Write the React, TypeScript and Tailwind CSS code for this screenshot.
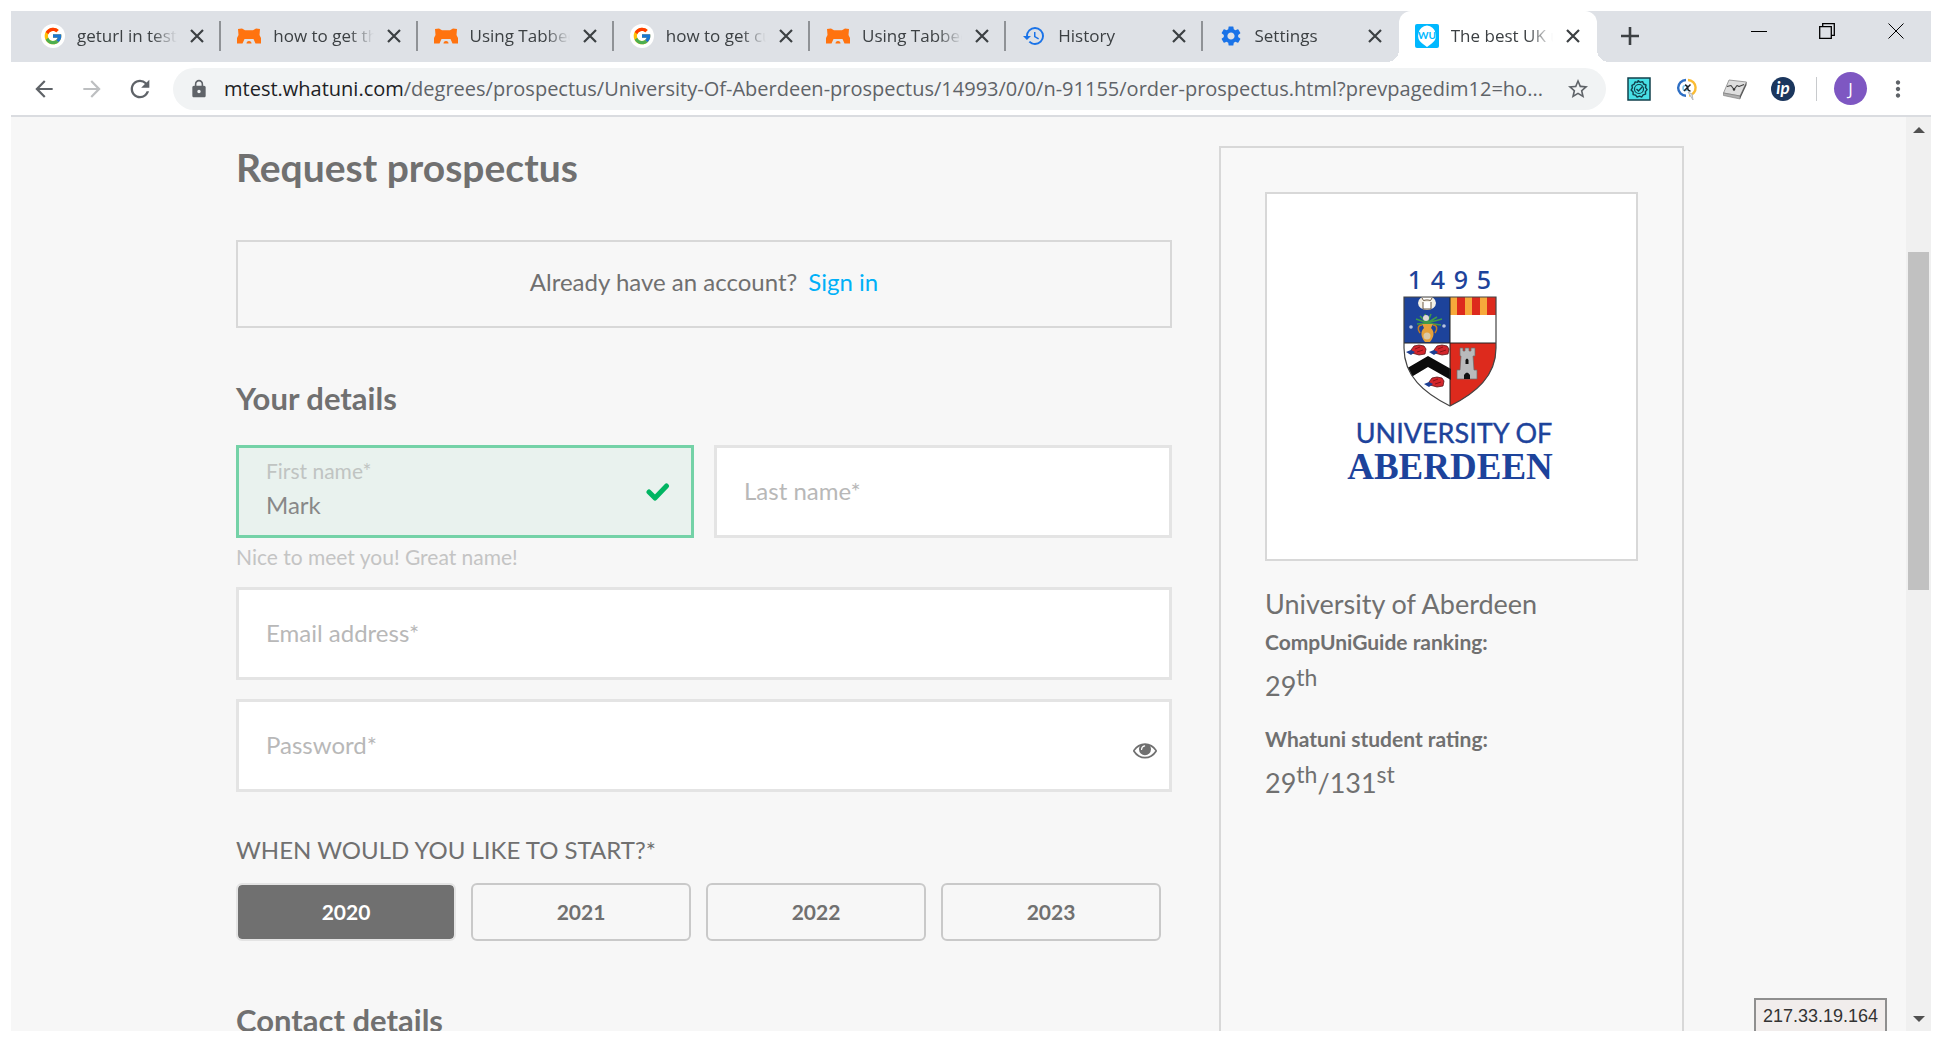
import React from "react";
import { FcGoogle } from "react-icons/fc";
import { MdHistory, MdSettings, MdLock, MdStarBorder, MdMoreVert, MdArrowBack, MdArrowForward, MdRefresh } from "react-icons/md";

const GoogleIcon = () => (
  <span className="grid size-6 place-items-center rounded-full bg-white">
    <FcGoogle className="size-5" />
  </span>
);

const BearIcon = () => (
  <svg viewBox="0 0 24 16" className="h-4 w-6" fill="#ff730f">
    <path d="M1 1 5 .500 8 2.200h8L19 .500 23 1l-.500 6L24 10v5.500h-5.500L16.500 11h-9l-2 4.500H0V10l1.500-3z" />
    <path d="M9.500 15.500q0-2.500 2.500-2.500t2.500 2.500z" />
  </svg>
);

const WhatuniIcon = () => (
  <svg viewBox="0 0 24 24" className="size-6">
    <rect width="24" height="24" rx="2" fill="#00b8ff" />
    <path d="M12 1.500a10 10 0 0 1 5 17.800L12 23l-5-3.700A10 10 0 0 1 12 1.500z" fill="#fff" />
    <text x="12" y="15" textAnchor="middle" fontSize="10" fontWeight="700" fill="#00b8ff" fontFamily="Lato, sans-serif">WU</text>
  </svg>
);

const CloseIcon = () => (
  <svg viewBox="0 0 14 14" className="size-[14px]" fill="none" stroke="currentColor" strokeWidth="2.200">
    <path d="m1 1 12 12M13 1 1 13" />
  </svg>
);

const tabs = [
  { title: "geturl in testcomplete", icon: <GoogleIcon /> },
  { title: "how to get the url of page", icon: <BearIcon /> },
  { title: "Using Tabbed browsing", icon: <BearIcon /> },
  { title: "how to get current url", icon: <GoogleIcon /> },
  { title: "Using Tabbed browsing", icon: <BearIcon /> },
  { title: "History", icon: <MdHistory className="size-6 text-[#1a73e8]" /> },
  { title: "Settings", icon: <MdSettings className="size-6 text-[#1a73e8]" /> },
  { title: "The best UK university", icon: <WhatuniIcon />, active: true },
];

function TabStrip() {
  return (
    <header className="flex h-[51px] shrink-0 items-stretch bg-[#dee1e6] pl-[14px] text-[#3c4043]">
      <div className="flex min-w-0 flex-[0_1_1572px]">
        {tabs.map((tab, i) => (
          <div
            key={i}
            className={
              tab.active
                ? "relative flex min-w-0 flex-1 items-center rounded-t-xl bg-white pr-3 pb-[2px] pl-4"
                : "flex min-w-0 flex-1 items-center pr-[10px] pb-[2px] pl-4"
            }
          >
            {tab.active && (
              <>
                <span className="absolute bottom-0 -left-3 size-3 bg-[radial-gradient(circle_at_0_0,#dee1e6_12px,white_12px)]" />
                <span className="absolute -right-3 bottom-0 size-3 bg-[radial-gradient(circle_at_100%_0,#dee1e6_12px,white_12px)]" />
              </>
            )}
            <span className="grid w-6 shrink-0 place-items-center">{tab.icon}</span>
            <a
              href="#"
              className="ml-3 min-w-0 flex-1 overflow-hidden text-[17px] leading-6 whitespace-nowrap [mask-image:linear-gradient(to_right,black_75%,transparent)]"
            >
              {tab.title}
            </a>
            <button aria-label="Close tab" className="ml-2 grid size-6 shrink-0 place-items-center">
              <CloseIcon />
            </button>
            {!tab.active && (
              <span className={i < 6 ? "-mr-[10px] ml-[10px] h-[30px] w-[2px] shrink-0 bg-[#8f9296]" : "-mr-[10px] ml-[10px] w-[2px] shrink-0"} />
            )}
          </div>
        ))}
      </div>
      <button aria-label="New tab" className="ml-5 grid w-[26px] place-items-center pb-[2px]">
        <svg viewBox="0 0 18 18" className="size-[18px]" stroke="currentColor" strokeWidth="2.600"><path d="M9 0v18M0 9h18" /></svg>
      </button>
      <div className="ml-auto flex pb-3 text-black">
        <button aria-label="Minimize" className="grid w-[68px] place-items-center">
          <svg viewBox="0 0 16 16" className="size-4" stroke="currentColor"><path d="M0 8.500h16" /></svg>
        </button>
        <button aria-label="Restore" className="grid w-[68px] place-items-center">
          <svg viewBox="0 0 16 16" className="size-4" fill="none" stroke="currentColor" strokeWidth="1.300">
            <path d="M.7 3.700h11.600v11.600H.7zM3.700 3.700V.7h11.600v11.600h-3" />
          </svg>
        </button>
        <button aria-label="Close window" className="grid w-[70px] place-items-center">
          <svg viewBox="0 0 16 16" className="size-4" stroke="currentColor"><path d="m.5.500 15 15m0-15-15 15" /></svg>
        </button>
      </div>
    </header>
  );
}

const BadgeExtension = () => (
  <svg viewBox="0 0 24 24" className="size-6">
    <rect x="1" y="1" width="22" height="22" fill="#48e0e6" stroke="#12404c" strokeWidth="1.500" />
    <path
      d="M12 4l2 1.600 2.500-.6 1 2.400 2.400 1-.500 2.500L21 13l-1.700 2 .2 2.500-2.500.7-1.300 2.200-2.400-.8-2.300.9-1.500-2-2.500-.5v-2.500L5 13.500l1.300-2.300-.5-2.500 2.300-1.100 1-2.300 2.500.5z"
      transform="translate(-.9 -.4)"
      fill="none"
      stroke="#12404c"
      strokeWidth="1.400"
      strokeLinejoin="round"
    />
    <circle cx="12" cy="12" r="4.500" fill="none" stroke="#12404c" strokeWidth="1.200" />
    <path d="m9.500 12 2 2 4-4.500" fill="none" stroke="#12404c" strokeWidth="1.400" />
  </svg>
);

const RingExtension = () => (
  <svg viewBox="0 0 24 24" className="size-6" fill="none">
    <path d="M11 3a7.800 7.800 0 0 0 0 15.700" stroke="#2e6fc4" strokeWidth="2.400" />
    <path d="M13 3a7.800 7.800 0 0 1 1 15.500" stroke="#fbbc34" strokeWidth="2.400" />
    <path d="m13 15 5 8-1-6z" fill="#e4e6e9" stroke="#b5b9be" />
    <circle cx="10.500" cy="11" r="2.500" stroke="#7cc4ea" strokeWidth="1.500" />
    <path d="M10 8q2 0 2.500 3t3 3M15.500 7.500 9 14" stroke="#222" strokeWidth="1.500" />
  </svg>
);

const SheetExtension = () => (
  <svg viewBox="0 0 24 24" className="size-6" strokeLinejoin="round">
    <path d="M6 3 23.500 5 17 19 .500 16z" fill="#dedede" stroke="#888" strokeWidth=".8" />
    <path d="m.5 16 16.500 3v3L.500 18.500z" fill="#b0b0b0" stroke="#777" strokeWidth=".6" />
    <path d="m17 19 6.500-14v3L17 22z" fill="#555" />
    <path d="m4 9.500 4-1 3 4 3-4 2 1 5-2" fill="none" stroke="#444" strokeWidth="1.200" />
    <circle cx="11" cy="12.500" r="1.200" fill="#333" />
  </svg>
);

const IpExtension = () => (
  <svg viewBox="0 0 24 24" className="size-6">
    <circle cx="12" cy="12" r="12" fill="#1b365d" />
    <text x="12" y="17" textAnchor="middle" fontSize="17" fontStyle="italic" fontWeight="700" fill="#fff" fontFamily="Lato, sans-serif">ip</text>
  </svg>
);

function Toolbar() {
  return (
    <div className="flex h-[55px] shrink-0 items-center border-b-2 border-[#dadce0] bg-white px-5 text-[#5f6368]">
      <button aria-label="Back"><MdArrowBack className="size-[26px]" /></button>
      <button aria-label="Forward" className="ml-[22px] text-[#bdbfc1]"><MdArrowForward className="size-[26px]" /></button>
      <button aria-label="Reload" className="ml-[21px]"><MdRefresh className="size-7" /></button>
      <form className="ml-[19px] flex h-[42px] min-w-0 flex-1 items-center rounded-full bg-[#f1f3f4] px-4">
        <MdLock className="size-5 shrink-0" />
        <div className="ml-[15px] min-w-0 flex-1 truncate text-[20px] leading-7">
          <span className="text-[#202124]">mtest.whatuni.com</span>
          /degrees/prospectus/University-Of-Aberdeen-prospectus/14993/0/0/n-91155/order-prospectus.html?prevpagedim12=ho...
        </div>
        <button type="button" aria-label="Bookmark" className="ml-3"><MdStarBorder className="size-6" /></button>
      </form>
      <div className="ml-[21px] flex items-center gap-6">
        <button aria-label="Badge extension"><BadgeExtension /></button>
        <button aria-label="Ring extension"><RingExtension /></button>
        <button aria-label="Sheet extension"><SheetExtension /></button>
        <button aria-label="IP extension"><IpExtension /></button>
      </div>
      <span className="mr-[17px] ml-[21px] h-6 w-px bg-[#c8cacd]" />
      <button className="grid size-[33px] place-items-center rounded-full bg-[#7e57c2] text-[17px] leading-6 text-white">J</button>
      <button aria-label="Menu" className="ml-[18px]"><MdMoreVert className="size-[26px]" /></button>
    </div>
  );
}

const fieldClass =
  "block h-[93px] w-full border-[3px] border-[#e4e4e4] bg-white px-[27px] pb-[2px] text-[24px] leading-8 text-[#888] outline-none placeholder:text-[#b8b8b8]";

function ProspectusForm() {
  return (
    <form className="min-w-0 flex-1">
      <h1 className="text-[39px] leading-[48px] font-bold">Request prospectus</h1>
      <p className="mt-[49px] flex h-22 items-center justify-center border-2 border-[#d8d8d8] pb-1 text-[24px] leading-8">
        Already have an account?
        <a href="#" className="ml-[11px] text-[#00b0f8]">Sign in</a>
      </p>
      <h2 className="mt-[51px] text-[31px] leading-[38px] font-bold">Your details</h2>
      <div className="mt-7 grid grid-cols-2 gap-5">
        <div>
          <div className="relative">
            <input
              id="first"
              defaultValue="Mark"
              className="block h-[93px] w-full border-[3px] border-[#74d2a7] bg-[#e9f2ee] px-[27px] pt-[26px] text-[24px] leading-8 text-[#888] outline-none"
            />
            <label htmlFor="first" className="absolute top-3 left-[30px] text-[21px] leading-7 text-[#c0c4c2]">First name*</label>
            <svg viewBox="0 0 24 18" className="absolute top-[38px] right-6 h-[18px] w-6" fill="none" stroke="#00b562" strokeWidth="5" strokeLinecap="round" strokeLinejoin="round">
              <path d="m3 9 6 6L20.500 3" />
            </svg>
          </div>
          <p className="mt-[5px] text-[21px] leading-7 text-[#c4c4c4]">Nice to meet you! Great name!</p>
        </div>
        <input aria-label="Last name" placeholder="Last name*" className={fieldClass} />
      </div>
      <input aria-label="Email address" placeholder="Email address*" className={`mt-4 ${fieldClass}`} />
      <div className="relative mt-[19px]">
        <input aria-label="Password" type="password" placeholder="Password*" className={fieldClass} />
        <button type="button" aria-label="Show password" className="absolute top-[39px] right-[15px]">
          <svg viewBox="0 0 1792 1792" className="size-6" fill="#707070">
            <path d="M1664 960q-152-236-381-353 61 104 61 225 0 185-131.500 316.500t-316.500 131.500-316.500-131.500-131.500-316.500q0-121 61-225-229 117-381 353 133 205 333.500 326.500t434.500 121.500 434.500-121.500 333.500-326.500zm-720-384q0-20-14-34t-34-14q-125 0-214.500 89.500t-89.500 214.500q0 20 14 34t34 14 34-14 14-34q0-86 61-147t147-61q20 0 34-14t14-34zm848 384q0 34-20 69-140 230-376.500 368.500t-499.500 138.500-499.500-139-376.500-368q-20-35-20-69t20-69q140-229 376.500-368t499.500-139 499.500 139 376.500 368q20 35 20 69z" />
            <circle cx="896" cy="832" r="390" />
            <path d="M640 850q0-200 230-260" fill="none" stroke="#fff" strokeWidth="90" strokeLinecap="round" />
          </svg>
        </button>
      </div>
      <fieldset className="mt-[42px]">
        <legend className="text-[24px] leading-8">WHEN WOULD YOU LIKE TO START?*</legend>
        <div className="mt-[17px] grid grid-cols-4 gap-[15px] pr-[11px]">
          {["2020", "2021", "2022", "2023"].map((year) => (
            <label
              key={year}
              className="relative grid h-[58px] place-items-center rounded-md border-2 border-[#c9c9c9] text-[21px] leading-7 font-bold has-checked:border-[#e4e4e4] has-checked:bg-[#707070] has-checked:bg-clip-padding has-checked:text-white"
            >
              <input type="radio" name="year" defaultChecked={year === "2020"} className="sr-only" />
              {year}
            </label>
          ))}
        </div>
      </fieldset>
      <h2 className="mt-[60px] text-[31px] leading-[38px] font-bold">Contact details</h2>
    </form>
  );
}

const Head = ({ x, y }: { x: number; y: number }) => (
  <g transform={`translate(${x} ${y})`}>
    <path d="M5 5 8 1l5-1 5 1 2 3-1 5-6 1-7-2z" fill="#d3262c" stroke="#5d1416" strokeWidth=".8" />
    <path d="m0 7 5-2 4 2-4 3z" fill="#1d3f94" />
    <path d="m9 4 5-2m-3 5 6-2" stroke="#8c1519" fill="none" />
  </g>
);

function AberdeenLogo() {
  return (
    <svg viewBox="0 0 210 220" className="h-[220px] w-[210px]" role="img" aria-label="University of Aberdeen 1495">
      <g fill="#1d439b">
        <g fontSize="25" textAnchor="middle" fontWeight="500" fontFamily="'Noto Sans', sans-serif">
          {["1", "4", "9", "5"].map((digit, i) => (
            <text key={digit} x={68 + i * 23} y="23">{digit}</text>
          ))}
        </g>
        <text x="107" y="177" textAnchor="middle" fontSize="27" stroke="#1d439b" strokeWidth=".4" fontFamily="Lato, sans-serif">UNIVERSITY OF</text>
        <text x="103" y="213" textAnchor="middle" fontSize="37" fontWeight="700" fontFamily="'Liberation Serif', serif">ABERDEEN</text>
      </g>
      <g transform="translate(-1 0)">
        <clipPath id="shield"><path d="M58 31h92v51c0 28-20 45-46 58C78 127 58 110 58 82z" /></clipPath>
        <g clipPath="url(#shield)">
          <path fill="#fff" d="M58 31h92v110H58z" />
          <path fill="#1d439b" d="M58 31h46v46H58z" />
          <path fill="#dd2a1d" d="M104 77h46v64h-46zM104 31h46v18h-46z" />
          <path fill="#f6a93b" d="M104 31h7v18h-7zM119 31h7v18h-7zM134 31h7v18h-7z" />
          <ellipse cx="81" cy="37" rx="9" ry="7" fill="#f4f0e6" />
          <path d="M76 32q1 4 4 2h2q3 2 4-2M77 36v7h8v-7" fill="#fff" stroke="#6b5840" />
          <path d="M81 57 70 53m11 4-7-7m7 7-2-9m2 9 4-9m-4 9 10-6m-10 6 15-4m-15 4 14 2m-13-2-11 1" stroke="#3f9a4a" strokeWidth="1.600" />
          <circle cx="80" cy="52" r="3" fill="#ded6d6" />
          <path d="M76 58h11l-2 4c4 4 3 9-1 14h-5c-4-5-5-10-1-14z" fill="#e5a03a" />
          <path d="M76 59c-4 0-5 4-2 8m13-8c4 0 5 4 2 8" fill="none" stroke="#c27b22" strokeWidth="1.600" />
          <circle cx="81" cy="70" r="3.500" fill="#d9c9a8" />
          <circle cx="65" cy="61" r="1.800" fill="#b9c3de" />
          <circle cx="98" cy="60" r="1.800" fill="#b9c3de" />
          <path d="m58 104 24-14 23 13v11L82 101l-20 12z" fill="#0b0b0b" />
          <Head x={60} y={79} />
          <Head x={83} y={79} />
          <Head x={78} y={111} />
          <path d="M114 82h3v3h2v-3h4v3h2v-3h4v8h-2l1 14h3v9h-20v-9h3l1-14h-1z" fill="#b9babc" stroke="#6b6b6b" strokeWidth=".7" />
          <path d="M118 113v-4q3-5 6 0v4zM119.500 98v-4q1.500-3 3 0v4z" fill="#111" />
          <path d="M104 31v110M58 77h92" stroke="#222" />
        </g>
        <path d="M58 31h92v51c0 28-20 45-46 58C78 127 58 110 58 82z" fill="none" stroke="#444" strokeWidth="1.200" />
      </g>
    </svg>
  );
}

const sup = "relative -top-[10px] align-baseline text-[23px] leading-none";

function UniversityCard() {
  return (
    <aside className="w-[465px] shrink-0 self-stretch border-2 border-b-0 border-[#d8d8d8] bg-[#f8f8f8] px-11 pt-11">
      <div className="flex h-[369px] justify-center border-2 border-[#d8d8d8] bg-white pt-[72px]">
        <AberdeenLogo />
      </div>
      <h3 className="mt-[25px] text-[27px] leading-9">University of Aberdeen</h3>
      <p className="mt-[6px] text-[21px] leading-7 font-bold">CompUniGuide ranking:</p>
      <p className="mt-3 text-[27px] leading-9">29<sup className={sup}>th</sup></p>
      <p className="mt-[21px] text-[21px] leading-7 font-bold">Whatuni student rating:</p>
      <p className="mt-3 text-[27px] leading-9">29<sup className={sup}>th</sup>/131<sup className={sup}>st</sup></p>
    </aside>
  );
}

function Scrollbar() {
  return (
    <div className="flex w-[25px] shrink-0 flex-col items-center bg-[#f0f0f0] pt-[10px] pb-[9px]">
      <span className="border-x-[6px] border-b-[6px] border-x-transparent border-b-[#505050]" />
      <span className="mt-[119px] h-[338px] w-[21px] bg-[#c1c1c1]" />
      <span className="mt-auto border-x-[6px] border-t-[6px] border-x-transparent border-t-[#505050]" />
    </div>
  );
}

export default function App() {
  return (
    <div className="h-screen bg-white p-[11px] font-['Open_Sans',sans-serif]">
      <div className="flex h-full flex-col overflow-hidden">
        <TabStrip />
        <Toolbar />
        <div className="flex min-h-0 flex-1">
          <div className="relative min-w-0 flex-1 overflow-hidden bg-[#f7f7f7] font-[Lato,sans-serif] text-[#707070]">
            <div className="mx-auto flex h-full max-w-[1451px] gap-[47px] pl-[3px]">
              <main className="flex min-w-0 flex-1 pt-[26px]"><ProspectusForm /></main>
              <div className="flex pt-[29px]"><UniversityCard /></div>
            </div>
            <div className="absolute right-[19px] bottom-0 border-2 border-b-0 border-[#8f8f8f] bg-[#f1edec] px-[7px] pt-1 pb-[3px] font-['Liberation_Sans',sans-serif] text-[18px] leading-6 text-[#333]">
              217.33.19.164
            </div>
          </div>
          <Scrollbar />
        </div>
      </div>
    </div>
  );
}
